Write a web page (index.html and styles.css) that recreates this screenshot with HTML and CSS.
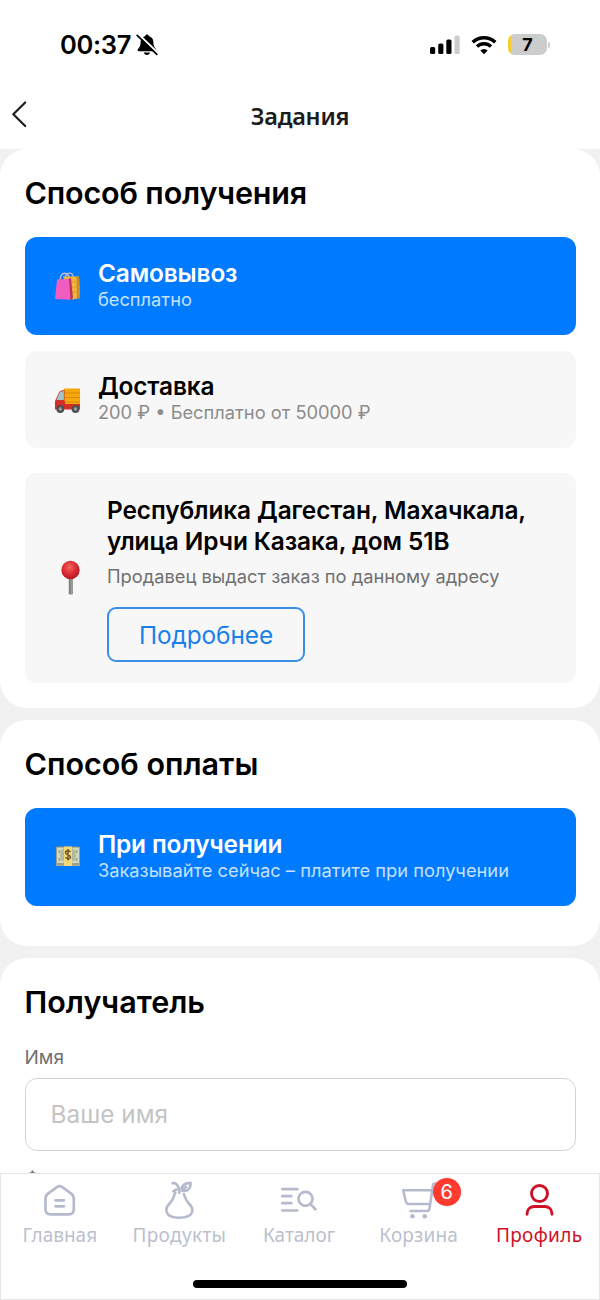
FILE: index.html
```html
<!DOCTYPE html>
<html lang="ru">
<head>
<meta charset="utf-8">
<title>Задания</title>
<link rel="stylesheet" href="styles.css">
</head>
<body>
<div class="screen">
  <header class="top">
    <div class="status">
      <div class="status-left">
        <span class="clock">00:37</span>
        <svg class="bell" width="22" height="22" viewBox="0 0 22 22">
          <path d="M11 .5c-.9 0-1.600.600-1.700 1.400C6.300 2.800 4.600 5 4.600 8c0 4-1.100 5.300-2.400 6.700-.9 1-.7 2.500.8 2.500h16c1.500 0 1.700-1.500.8-2.500C18.500 13.300 17.400 12 17.400 8c0-3-1.700-5.200-4.700-6.100C12.600 1.100 11.900.5 11 .5z"/>
          <path d="M7.800 18.600h6.200c-.3 1.500-1.500 2.400-3.100 2.400s-2.800-.9-3.100-2.400z"/>
          <path d="M2.600 .4L22 19" stroke="#fff" stroke-width="2"/>
          <path d="M1.200 1.400L20.800 20.300" stroke="#000" stroke-width="1.700" stroke-linecap="round"/>
        </svg>
      </div>
      <div class="status-right">
        <svg width="30" height="20" viewBox="0 0 30 20">
          <rect x="0" y="12" width="5.200" height="7" rx="1.600"/>
          <rect x="8.200" y="8.500" width="5.200" height="10.500" rx="1.600"/>
          <rect x="16.300" y="4.500" width="5.200" height="14.500" rx="1.600"/>
          <rect x="24.500" y="0.500" width="5.200" height="18.500" rx="1.600" fill="#ccc"/>
        </svg>
        <svg width="26" height="20" viewBox="0 0 26 20">
          <path d="M1.700 7.200a16.300 16.300 0 0 1 22.600 0" fill="none" stroke="#000" stroke-width="3.500"/>
          <path d="M6 11.600a10 10 0 0 1 14 0" fill="none" stroke="#000" stroke-width="3.500"/>
          <path d="M9.300 15.500a5.300 5.300 0 0 1 7.400 0L13 19.300z"/>
        </svg>
        <div class="battery"><span>7</span></div>
      </div>
    </div>
    <div class="titlebar">
      <svg class="back" width="20" height="30" viewBox="0 0 20 30"><path d="M15.200 3.500L3.300 15.300 15.200 27" fill="none" stroke="#1c1c1c" stroke-width="2.200" stroke-linecap="round" stroke-linejoin="round"/></svg>
      <h1>Задания</h1>
    </div>
  </header>

  <main class="content">
    <section class="panel pickup">
      <h2 class="heading-pickup">Способ получения</h2>
      <div class="option active">
        <svg class="emoji" width="26" height="32" viewBox="0 0 26 32">
          <path d="M10 8c1-6 7-7 9 0M5 10c1-9 8-9 10 0" fill="none" stroke="#c9b7d8" stroke-width="1.300"/>
          <path d="M8 6.500h16L25 28l-8 1.500z" fill="#f3b73c"/>
          <path d="M21.500 6.500H24L25 28l-3 .5z" fill="#c88c2c"/>
          <path d="M16 12h7.500M17 17h7.500M17 22h8" stroke="#d99a2c" stroke-width="1"/>
          <path d="M13 9l3-1 2 20-3 2z" fill="#b8365e"/>
          <path d="M2 9.500L14 9l1.500 20.800L0 29z" fill="#f25cc0"/>
        </svg>
        <div class="option-text"><div class="option-title">Самовывоз</div><div class="option-sub">бесплатно</div></div>
      </div>
      <div class="option">
        <svg class="emoji" width="26" height="32" viewBox="0 0 26 32">
          <path d="M9 5.500h16V24H9z" fill="#f5a70c"/>
          <path d="M9 10h16M9 14.500h16M9 19h16" stroke="#d98a08" stroke-width="1"/>
          <path d="M4 9.500Q5 7 9.500 7V21H0v-3z" fill="#c9342d"/>
          <path d="M4.500 10Q5.500 8 8.800 8v9H1.500z" fill="#9fc5cf"/>
          <path d="M0 18.500h10V21h15v5.500H0z" fill="#d52c25"/>
          <circle cx="5.300" cy="26" r="3.900" fill="#4b5054"/><circle cx="5.300" cy="26" r="1.700" fill="#9a9ea0"/>
          <circle cx="20.500" cy="26" r="3.900" fill="#4b5054"/><circle cx="20.500" cy="26" r="1.700" fill="#9a9ea0"/>
        </svg>
        <div class="option-text"><div class="option-title">Доставка</div><div class="option-sub">200 ₽ • Бесплатно от 50000 ₽</div></div>
      </div>
      <div class="address">
        <svg class="pin" width="20" height="36" viewBox="0 0 20 36">
          <defs><radialGradient id="ball" cx=".45" cy=".35" r=".65"><stop offset="0" stop-color="#f4695c"/><stop offset=".5" stop-color="#de3038"/><stop offset="1" stop-color="#b51624"/></radialGradient></defs>
          <rect x="7.800" y="16" width="4" height="18.500" rx="1" fill="#85807e"/>
          <rect x="9.800" y="16" width="1" height="18" fill="#aaa5a3"/>
          <circle cx="9.500" cy="10" r="9.200" fill="url(#ball)"/>
        </svg>
        <div class="address-text">
          <div class="address-title">Республика Дагестан, Махачкала,<br>улица Ирчи Казака, дом 51В</div>
          <div class="address-sub">Продавец выдаст заказ по данному адресу</div>
          <button class="more">Подробнее</button>
        </div>
      </div>
    </section>

    <section class="panel payment">
      <h2>Способ оплаты</h2>
      <div class="option active">
        <svg class="emoji" width="26" height="32" viewBox="0 0 26 32">
          <rect x="1" y="5.500" width="24" height="19.500" fill="#8c927b"/>
          <rect x="1.800" y="6.500" width="22.400" height="15.500" fill="#d2d7bd"/>
          <path d="M1 23h24M1 24.500h24" stroke="#b9bca4" stroke-width=".7"/>
          <circle cx="13" cy="14" r="8" fill="#b1b99a"/>
          <path d="M3.500 9h2v3h-2zM20.500 9h2v3h-2zM3.500 17h2v3h-2zM20.500 17h2v3h-2z" fill="#a2aa91"/>
          <rect x="9" y="5.500" width="8" height="19.500" fill="#f5d878"/>
          <path d="M15.500 11c-1-1.800-5-1.600-5 .7 0 2.600 5 1.600 5 4.200 0 2.200-4 2.400-5 .4M13 8v11.500" fill="none" stroke="#66572c" stroke-width="1.400"/>
        </svg>
        <div class="option-text"><div class="option-title">При получении</div><div class="option-sub">Заказывайте сейчас – платите при получении</div></div>
      </div>
    </section>

    <section class="panel recipient">
      <h2>Получатель</h2>
      <label class="field-label" for="name">Имя</label>
      <input class="field" id="name" type="text" placeholder="Ваше имя">
      <label class="field-label next">Фамилия</label>
    </section>
  </main>

  <nav class="tabs">
    <div class="tab">
      <svg width="36" height="40" viewBox="0 0 36 40" fill="none" stroke="#b6bacd" stroke-width="2.700" stroke-linecap="round" stroke-linejoin="round"><path d="M3.500 19Q3.500 15.500 6 13.700L15.300 6.900Q17.700 5.300 20 6.900L29.300 13.700Q31.800 15.500 31.800 19V29.500Q31.800 34.300 27 34.300H8.500Q3.500 34.300 3.500 29.500zM13.500 20.300H22M13.500 26.300H22"/></svg>
      <span>Главная</span>
    </div>
    <div class="tab">
      <svg width="36" height="40" viewBox="0 0 36 40" fill="none" stroke="#b6bacd" stroke-width="2.600" stroke-linecap="round" stroke-linejoin="round"><path d="M14.500 12.500C12.500 15 13.200 19 9 23C5.500 26.500 4.500 29.500 5.800 32.500C7.500 36.500 12.500 37.700 18 37.700S29.300 36.500 31 32.500C32.200 29.500 31 26.500 27.500 23C24.500 20 24.300 17.500 22.800 14M11.500 3.300C15 2.300 18.200 5.500 18.400 13M12.300 11.300Q14 9.200 17.500 9M21 10.500C19.700 6.500 23 2.900 29.500 2.900C30 8.500 26.500 12 21 10.500zM21 10.500L25 7"/></svg>
      <span class="wide">Продукты</span>
    </div>
    <div class="tab">
      <svg width="36" height="40" viewBox="0 0 36 40" fill="none" stroke="#b6bacd" stroke-width="2.700" stroke-linecap="round"><path d="M1.300 9.200h15M1.300 16.200h9M1.300 23.200h9M1.300 30.500h15"/><circle cx="24.500" cy="18.800" r="7"/><path d="M29.800 24.300L34.500 29.300"/></svg>
      <span>Каталог</span>
    </div>
    <div class="tab">
      <svg width="36" height="40" viewBox="0 0 36 40" fill="none" stroke="#b6bacd" stroke-width="2.500" stroke-linecap="round" stroke-linejoin="round"><path d="M36 3.500h-2.500Q32.200 3.500 32 5L28.500 28.700Q28 31 26 31H9.500M30.800 10.300H2.200L4.800 21.300Q5.600 24.100 8.500 24.100H29"/><g fill="#b6bacd" stroke="none"><circle cx="11.500" cy="36.200" r="2.300"/><circle cx="23.800" cy="36.200" r="2.300"/></g></svg>
      <span class="cart-label">Корзина</span>
      <b class="badge">6</b>
    </div>
    <div class="tab current">
      <svg width="36" height="40" viewBox="0 0 36 40" fill="none" stroke="#ce1126" stroke-width="2.900" stroke-linecap="round"><circle cx="18.500" cy="13.500" r="8"/><path d="M6 34.300C6 29.300 9 26.500 13.500 26.500H23.500C28 26.500 31 29.300 31 34.300"/></svg>
      <span class="wide">Профиль</span>
    </div>
    <div class="home-indicator"></div>
  </nav>
</div>
</body>
</html>
```
FILE: styles.css
```css
* { box-sizing: border-box; }
body { margin: 0; background: #f1f1f1; font-family: Inter, "Noto Sans", sans-serif; color: #000; }
.screen { width: 600px; height: 1300px; display: flex; flex-direction: column; overflow: hidden; }

.top { flex: none; height: 149px; background: #fff; }
.status { height: 89px; padding: 0 53px 0 60px; display: flex; align-items: center; justify-content: space-between; }
.status-left { display: flex; align-items: center; gap: 5px; }
.clock { font-size: 25.500px; font-weight: 600; line-height: 30px; letter-spacing: -0.300px; }
.status-right { display: flex; align-items: center; gap: 11px; }
.battery { position: relative; width: 39px; height: 21px; border-radius: 7px; background: linear-gradient(90deg, #f5cf2f 3.500px, #ccc 3.500px); font-family: Inter, sans-serif; font-size: 18px; font-weight: 700; line-height: 21px; text-align: center; }
.battery::after { content: ""; position: absolute; left: 40px; top: 8px; width: 2px; height: 6px; border-radius: 0 2px 2px 0; background: #ccc; }
.titlebar { height: 53px; display: grid; grid-template-columns: 60px 1fr 60px; align-items: center; }
.back { margin-left: 10px; margin-bottom: 4px; }
.titlebar h1 { margin: 0; font: 600 23.500px/32px "Noto Sans", sans-serif; letter-spacing: -0.250px; text-align: center; color: #1c1c1c; }

.content { flex: 1; min-height: 0; display: flex; flex-direction: column; gap: 12.500px; overflow: hidden; }
.panel { flex: none; background: #fff; border-radius: 27px; padding: 25px 24.500px 0; }
.panel h2 { margin: 0; font-size: 30.500px; font-weight: 600; line-height: 37px; white-space: nowrap; }
.panel .heading-pickup { letter-spacing: -0.160px; }
.pickup { height: 558.500px; }
.payment { height: 225.500px; }
.recipient { height: 400px; }

.option { height: 97.500px; margin-top: 16px; padding-left: 30px; border-radius: 12px; background: #f7f7f7; display: flex; align-items: center; gap: 17.400px; }
.panel h2 + .option { margin-top: 26.200px; }
.option.active { background: #007aff; color: #fff; }
.emoji { flex: none; }
.option-text { padding-bottom: 3.500px; }
.option-title { font-size: 24.400px; font-weight: 600; line-height: 30px; letter-spacing: -0.120px; white-space: nowrap; }
.option-sub { font-size: 18.300px; line-height: 23px; color: #8c8c8c; white-space: nowrap; }
.active .option-sub { color: #c4e1ff; }

.address { height: 210px; margin-top: 24.700px; padding: 1.500px 0 0 36.500px; border-radius: 12px; background: #f7f7f7; display: flex; align-items: center; gap: 26px; }
.pin { flex: none; margin-top: -2px; }
.address-title { font-size: 24.400px; font-weight: 600; line-height: 30.500px; letter-spacing: -0.100px; white-space: nowrap; }
.address-sub { margin-top: 8px; font-size: 18.300px; line-height: 25px; color: #707070; white-space: nowrap; }
.more { display: block; margin-top: 18px; width: 198px; height: 55px; padding: 0; border: 2px solid #3a8ee6; border-radius: 9px; background: transparent; color: #1a7fe8; font: 400 24.400px/30px Inter, sans-serif; letter-spacing: -0.100px; }

.field-label { display: block; margin-top: 25.800px; font-size: 19px; line-height: 24px; color: #707070; }
.field { display: block; width: 100%; height: 73px; margin-top: 8.200px; padding: 0 25px; border: 1.500px solid #d4d4d4; border-radius: 12px; background: #fff; font: 400 24.400px Inter, sans-serif; }
.field::placeholder { color: #c4c4c4; opacity: 1; }
.field-label.next { margin-top: 16px; }

.tabs { flex: none; height: 127px; border: 1px solid #e6e6e6; background: #fff; display: grid; grid-template-columns: repeat(5, 1fr); grid-template-rows: 1fr auto; }
.tab { position: relative; padding: 6px 2px 0 0; display: flex; flex-direction: column; align-items: center; gap: 2px; color: #bcbfce; font: 400 19px/26px "Noto Sans", sans-serif; white-space: nowrap; }
.tab svg { flex: none; overflow: visible; }
.tab .wide { letter-spacing: 0.350px; }
.tab .cart-label { letter-spacing: 0.150px; }
.tab.current { padding-right: 0; color: #ce1126; }
.badge { position: absolute; left: 73px; top: 4px; width: 28px; height: 28px; border-radius: 50%; background: #ff3b30; color: #fff; font: 400 20px/28px Inter, sans-serif; text-align: center; }
.home-indicator { grid-column: 1 / -1; justify-self: center; width: 214px; height: 8px; margin-bottom: 11px; border-radius: 4px; background: #000; }
```
